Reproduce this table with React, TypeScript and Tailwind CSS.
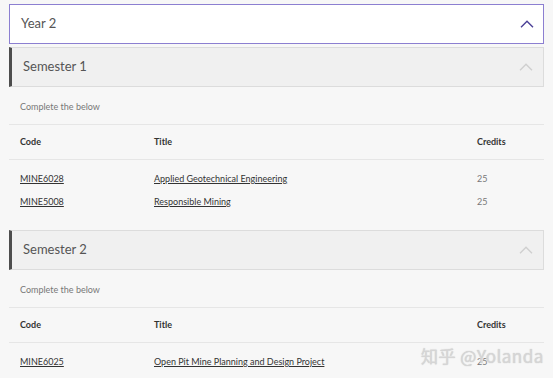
import React from 'react';

type Unit = { code: string; title: string; credits: number };

const semesters: { name: string; units: Unit[] }[] = [
    {
        name: 'Semester 1',
        units: [
            { code: 'MINE6028', title: 'Applied Geotechnical Engineering', credits: 25 },
            { code: 'MINE5008', title: 'Responsible Mining', credits: 25 },
        ],
    },
    {
        name: 'Semester 2',
        units: [{ code: 'MINE6025', title: 'Open Pit Mine Planning and Design Project', credits: 25 }],
    },
];

const ChevronUp = ({ className }: { className: string }) => (
    <svg width="14" height="8" viewBox="0 0 14 8" fill="none" className={className}>
        <path d="M1 7.2L7 1.2L13 7.2" stroke="currentColor" strokeWidth="1.4" />
    </svg>
);

const SemesterBlock = ({ name, units }: { name: string; units: Unit[] }) => (
    <div>
        <div className="h-10 flex items-center justify-between bg-[#f0f0f0] border border-[#dcdcdc] border-l-[3px] border-l-[#4d4d4d] pl-[11px] pr-[10px]">
            <span className="text-[13px] text-[#555]">{name}</span>
            <ChevronUp className="text-[#cfcfcf]" />
        </div>
        <div className="px-[11px] h-[37px] pt-[3px] flex items-center text-[9px] text-[#777]">Complete the below</div>
        <div className="border-t border-[#e6e6e6]">
            <div className="flex items-center h-[35px] px-[11px] text-[9px] font-bold text-[#333] border-b border-[#e6e6e6]">
                <span className="w-[134px]">Code</span>
                <span className="flex-1">Title</span>
                <span className="w-[56px]">Credits</span>
            </div>
            <div className="pt-[7px] pb-[17px]">
                {units.map(u => (
                    <div key={u.code} className="flex items-center h-[23px] px-[11px] text-[9px] text-[#333]">
                        <span className="w-[134px] underline">{u.code}</span>
                        <span className="flex-1 underline">{u.title}</span>
                        <span className="w-[56px] text-[#777]">{u.credits}</span>
                    </div>
                ))}
            </div>
        </div>
    </div>
);

export default function App() {
    return (
        <div className="relative w-[553px] h-[378px] overflow-hidden bg-[#f7f7f7] pt-1 px-[7px] font-['Lato',sans-serif]">
            <div className="mx-[2px] h-10 flex items-center justify-between bg-white border-[1.5px] border-[#8c7fd1] pl-[11px] pr-[9px]">
                <span className="text-[13px] text-[#555]">Year 2</span>
                <ChevronUp className="text-[#4b3f96]" />
            </div>
            <div className="mx-[2px] mt-[3px]">
                {semesters.map(s => (
                    <SemesterBlock key={s.name} name={s.name} units={s.units} />
                ))}
            </div>
            <div className="absolute left-[421px] top-[343px] text-[17px] text-[#d5d5d5] [text-shadow:0_0_2px_#fff,0_0_1px_#999] font-['Noto_Sans_CJK_SC',sans-serif] tracking-[0.5px]">
                知乎 @Yolanda
            </div>
        </div>
    );
}
